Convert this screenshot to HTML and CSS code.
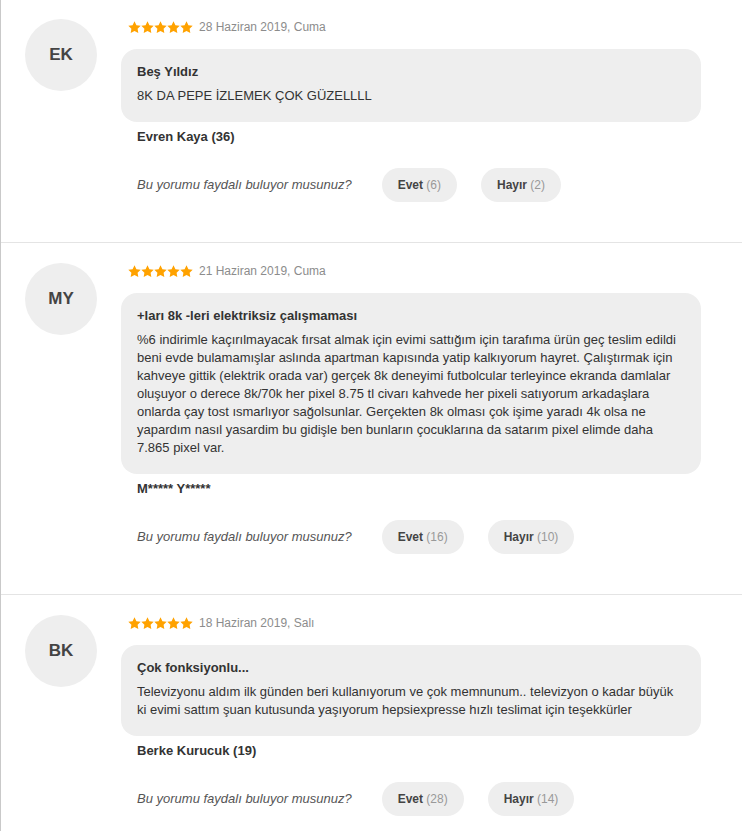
FILE: index.html
```html
<!DOCTYPE html>
<html lang="tr">
<head>
<meta charset="utf-8">
<title>Yorumlar</title>
<link rel="stylesheet" href="styles.css">
</head>
<body>
<svg width="0" height="0" class="defs" aria-hidden="true">
  <defs>
    <symbol id="star" viewBox="1.5 1.5 21 21">
      <path d="M12 2l3.09 6.26L22 9.27l-5 4.87 1.18 6.88L12 17.77l-6.18 3.25L7 14.14 2 9.27l6.91-1.01L12 2z"/>
    </symbol>
  </defs>
</svg>
<div class="list">
  <div class="review review--first">
    <div class="avatar">EK</div>
    <div class="content">
      <div class="meta">
        <span class="stars">
          <svg class="star"><use href="#star"/></svg><svg class="star"><use href="#star"/></svg><svg class="star"><use href="#star"/></svg><svg class="star"><use href="#star"/></svg><svg class="star"><use href="#star"/></svg>
        </span>
        <span class="date">28 Haziran 2019, Cuma</span>
      </div>
      <div class="bubble">
        <div class="title">Beş Yıldız</div>
        <div class="text">8K DA PEPE İZLEMEK ÇOK GÜZELLLL</div>
      </div>
      <div class="name">Evren Kaya (36)</div>
      <div class="actions">
        <span class="question">Bu yorumu faydalı buluyor musunuz?</span>
        <button class="vote">Evet <span class="count">(6)</span></button>
        <button class="vote">Hayır <span class="count">(2)</span></button>
      </div>
    </div>
  </div>

  <div class="review">
    <div class="avatar">MY</div>
    <div class="content">
      <div class="meta">
        <span class="stars">
          <svg class="star"><use href="#star"/></svg><svg class="star"><use href="#star"/></svg><svg class="star"><use href="#star"/></svg><svg class="star"><use href="#star"/></svg><svg class="star"><use href="#star"/></svg>
        </span>
        <span class="date">21 Haziran 2019, Cuma</span>
      </div>
      <div class="bubble">
        <div class="title">+ları 8k -leri elektriksiz çalışmaması</div>
        <div class="text">%6 indirimle kaçırılmayacak fırsat almak için evimi sattığım için tarafıma ürün geç teslim edildi<br>beni evde bulamamışlar aslında apartman kapısında yatip kalkıyorum hayret. Çalıştırmak için<br>kahveye gittik (elektrik orada var) gerçek 8k deneyimi futbolcular terleyince ekranda damlalar<br>oluşuyor o derece 8k/70k her pixel 8.75 tl civarı kahvede her pixeli satıyorum arkadaşlara<br>onlarda çay tost ısmarlıyor sağolsunlar. Gerçekten 8k olması çok işime yaradı 4k olsa ne<br>yapardım nasıl yasardim bu gidişle ben bunların çocuklarına da satarım pixel elimde daha<br>7.865 pixel var.</div>
      </div>
      <div class="name">M***** Y*****</div>
      <div class="actions">
        <span class="question">Bu yorumu faydalı buluyor musunuz?</span>
        <button class="vote">Evet <span class="count">(16)</span></button>
        <button class="vote">Hayır <span class="count">(10)</span></button>
      </div>
    </div>
  </div>

  <div class="review">
    <div class="avatar">BK</div>
    <div class="content">
      <div class="meta">
        <span class="stars">
          <svg class="star"><use href="#star"/></svg><svg class="star"><use href="#star"/></svg><svg class="star"><use href="#star"/></svg><svg class="star"><use href="#star"/></svg><svg class="star"><use href="#star"/></svg>
        </span>
        <span class="date">18 Haziran 2019, Salı</span>
      </div>
      <div class="bubble">
        <div class="title">Çok fonksiyonlu...</div>
        <div class="text">Televizyonu aldım ilk günden beri kullanıyorum ve çok memnunum.. televizyon o kadar büyük<br>ki evimi sattım şuan kutusunda yaşıyorum hepsiexpresse hızlı teslimat için teşekkürler</div>
      </div>
      <div class="name">Berke Kurucuk (19)</div>
      <div class="actions">
        <span class="question">Bu yorumu faydalı buluyor musunuz?</span>
        <button class="vote">Evet <span class="count">(28)</span></button>
        <button class="vote">Hayır <span class="count">(14)</span></button>
      </div>
    </div>
  </div>
</div>
</body>
</html>
```

FILE: styles.css
```css
* { box-sizing: border-box; }

html, body {
  margin: 0;
  padding: 0;
  background: #fff;
}

body {
  font-family: "Liberation Sans", Arial, sans-serif;
  color: #333;
  font-size: 13px;
  line-height: 18px;
}

.defs {
  position: absolute;
  width: 0;
  height: 0;
  overflow: hidden;
}

.list {
  border-left: 1px solid #c9c9c9;
  min-height: 831px;
}

.review {
  display: flex;
  align-items: flex-start;
  padding: 20px 0 40px 24px;
  border-bottom: 1px solid #e4e4e4;
}

.review--first {
  padding-top: 19px;
}

.avatar {
  flex: 0 0 72px;
  width: 72px;
  height: 72px;
  border-radius: 50%;
  background: #eeeeee;
  color: #444;
  font-weight: bold;
  font-size: 17px;
  display: flex;
  align-items: center;
  justify-content: center;
  margin-right: 24px;
}

.content {
  flex: 1;
  margin-right: 41px;
}

.meta {
  display: flex;
  align-items: center;
  height: 16px;
  padding-left: 7px;
  margin-bottom: 14px;
}

.stars {
  display: flex;
  align-items: center;
  margin-right: 6px;
}

.star {
  width: 13px;
  height: 13px;
  fill: #ffa200;
  display: block;
}

.date {
  font-size: 12px;
  color: #8c8c8c;
}

.bubble {
  background: #eeeeee;
  border-radius: 16px;
  padding: 14px 6px 17px 16px;
}

.title {
  font-weight: bold;
  color: #333;
  margin-bottom: 6px;
}

.text {
  color: #333;
}

.name {
  font-weight: bold;
  color: #333;
  padding-left: 16px;
  margin-top: 6px;
}

.actions {
  display: flex;
  align-items: center;
  padding-left: 16px;
  margin-top: 22px;
}

.question {
  font-style: italic;
  color: #555;
  margin-right: 30px;
}

.vote {
  font-family: inherit;
  font-size: 12px;
  font-weight: bold;
  color: #444;
  background: #eeeeee;
  border: none;
  border-radius: 17px;
  height: 34px;
  padding: 0 16px;
  margin-right: 24px;
  cursor: pointer;
}

.count {
  font-weight: normal;
  color: #999;
}
```
